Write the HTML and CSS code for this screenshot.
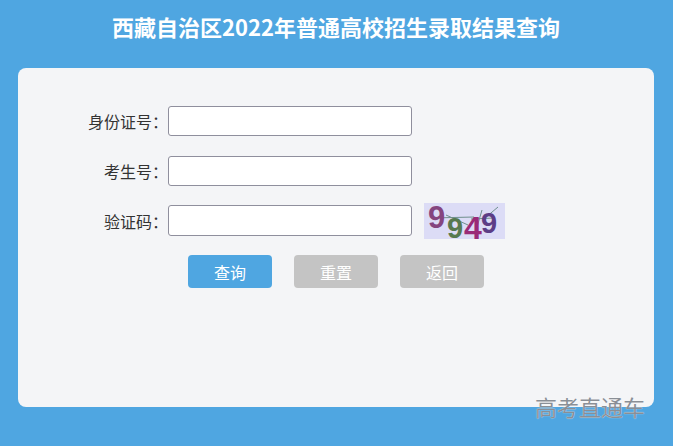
FILE: index.html
```html
<!DOCTYPE html>
<html lang="zh-CN">
<head>
    <meta charset="UTF-8">
    <title>西藏自治区2022年普通高校招生录取结果查询</title>
    <link rel="stylesheet" href="styles.css">
</head>
<body>
    <h1 class="title">西藏自治区2022年普通高校招生录取结果查询</h1>
    <div class="card">
        <form class="query-form">
            <div class="row">
                <label class="label">身份证号：</label>
                <input class="field" type="text">
            </div>
            <div class="row">
                <label class="label">考生号：</label>
                <input class="field" type="text">
            </div>
            <div class="row row-code">
                <label class="label">验证码：</label>
                <input class="field field-code" type="text">
                <svg class="captcha" width="81" height="36" viewBox="0 0 81 36">
                    <rect width="81" height="36" fill="#dcdcf6"/>
                    <path d="M8 15 L50 14 M22 12 L44 22 M58 7 L53 24 M61 15 L74 4 M47 16 L70 15" stroke="#6f8f8c" stroke-width="1" fill="none"/>
                    <text class="digit" x="4" y="25" font-size="31" fill="#85457f">9</text>
                    <text class="digit" x="23" y="35" font-size="29" fill="#56794f">9</text>
                    <text class="digit" x="40" y="36" font-size="32" fill="#9a2a78">4</text>
                    <text class="digit" x="57" y="30" font-size="29" fill="#5c3d86">9</text>
                </svg>
            </div>
            <div class="actions">
                <button class="btn btn-primary" type="button">查询</button>
                <button class="btn" type="button">重置</button>
                <button class="btn" type="button">返回</button>
            </div>
        </form>
    </div>
    <div class="watermark">高考直通车</div>
</body>
</html>
```

FILE: styles.css
```css
html, body {
    height: 100%;
}
body {
    margin: 0;
    padding: 0 19px 39px 18px;
    box-sizing: border-box;
    display: flex;
    flex-direction: column;
    background-color: #4fa6e1;
    font-family: "Noto Sans CJK SC", "Liberation Sans", sans-serif;
    overflow: hidden;
    position: relative;
}
.title {
    margin: 0;
    height: 68px;
    padding-top: 9px;
    box-sizing: border-box;
    font-size: 22px;
    line-height: 34px;
    font-weight: 700;
    color: #fff;
    text-align: center;
}
.card {
    flex: 1;
    background-color: #f4f5f7;
    border-radius: 8px;
    padding: 38px 0 0;
}
.query-form {
    display: flex;
    flex-direction: column;
}
.row {
    display: flex;
    align-items: center;
    height: 30px;
    margin-bottom: 20px;
}
.row-code {
    height: 31px;
    margin-top: -1px;
    margin-bottom: 19px;
}
.label {
    width: 150px;
    box-sizing: border-box;
    font-size: 16px;
    color: #333;
    text-align: right;
}
.field {
    width: 244px;
    height: 30px;
    box-sizing: border-box;
    margin: 0;
    background: #fff;
    border: 1px solid #8f8f9d;
    border-radius: 3px;
}
.field-code {
    height: 31px;
}
.captcha {
    margin-left: 12px;
}
.digit {
    font-family: "Liberation Sans", sans-serif;
    font-weight: 700;
}
.actions {
    display: flex;
    gap: 22px;
    padding-left: 170px;
}
.btn {
    width: 84px;
    height: 33px;
    padding: 0;
    border: none;
    border-radius: 4px;
    background-color: #c4c4c4;
    color: #fff;
    font-family: inherit;
    font-size: 16px;
}
.btn-primary {
    background-color: #4fa6e1;
}
.watermark {
    position: absolute;
    top: 391px;
    left: 535px;
    font-size: 22px;
    line-height: 30px;
    color: #8a8f96;
    text-shadow: 0 0 1px #fff;
    white-space: nowrap;
}
```
